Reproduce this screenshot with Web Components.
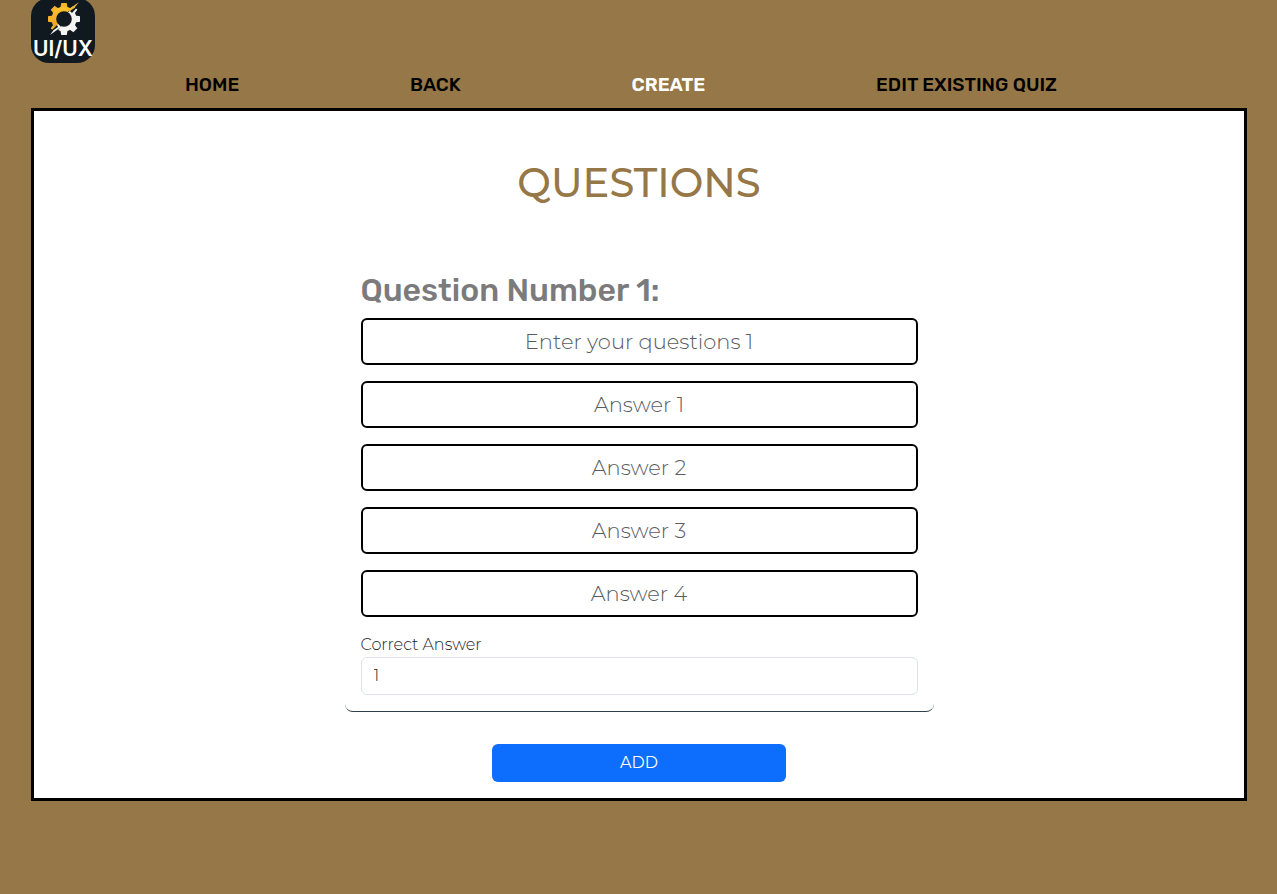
<!DOCTYPE html>
<html lang="en">
<head>
<meta charset="utf-8">
<meta name="viewport" content="width=device-width, initial-scale=1">
<title>Create quiz</title>
<style>
:root { --brand: #967747; --display: Montserrat, Inter, sans-serif; --ui: Rubik, Roboto, sans-serif; }
body { margin: 0; background: var(--brand); font: 300 16px/24px var(--display); color: #212529; }
</style>
</head>
<body>
<quiz-app></quiz-app>
<script>
const define = (name, html, setup) => customElements.define(name, class extends HTMLElement {
  constructor() {
    super();
    this.attachShadow({ mode: 'open' });
  }
  connectedCallback() {
    if (this.shadowRoot.childNodes.length) return;
    const template = document.createElement('template');
    template.innerHTML = '<style>*{box-sizing:border-box}</style>' + html;
    this.shadowRoot.append(template.content.cloneNode(true));
    if (setup) setup(this, this.shadowRoot);
  }
});

const teeth = [0, 45, 90, 135, 180, 225, 270, 315]
  .map(a => `<path transform="rotate(${a} 33 19)" d="M29.4 8 L30.2 3 H35.8 L36.6 8 Z"/>`).join('');

define('app-logo', `
<style>
:host { display: block; width: 64px; height: 63px; }
svg { display: block; width: 100%; height: 100%; }
text { font: 600 21px Inter, sans-serif; }
</style>
<svg viewBox="0 0 64 63" role="img" aria-label="UI/UX">
  <defs>
    <clipPath id="upper"><path d="M14 0 H48 L34 15 L32 22 L18 36 H14 Z"/></clipPath>
    <clipPath id="lower"><path d="M52 0 V40 H20 L33 22 L34 15 L48 3 Z"/></clipPath>
    <linearGradient id="gold" x2="0" y2="1"><stop offset="0" stop-color="#fcc52e"/><stop offset="1" stop-color="#e99a24"/></linearGradient>
  </defs>
  <rect y="-2" width="64" height="65" rx="18" fill="#101820"/>
  <g clip-path="url(#upper)" fill="#f5b32b">${teeth}<circle cx="33" cy="19" r="12.5" fill="url(#gold)"/></g>
  <g clip-path="url(#lower)" fill="#f4f4f2">${teeth}<circle cx="33" cy="19" r="12.5"/></g>
  <circle cx="33" cy="19" r="7.8" fill="#101820"/>
  <path d="M48 2 L37 10 L40 12 Z" fill="#f8bd2c"/>
  <path d="M49 4 L39 11 L41 13 Z" fill="#101820"/>
  <path d="M19 35 L27 24 L30 27 Z" fill="#f4f4f2"/>
  <path d="M17 34 L26 25 L27 27 Z" fill="#101820"/>
  <text x="32" y="56" text-anchor="middle" fill="#fff">UI/UX</text>
</svg>`);

define('nav-link', `
<style>
:host { display: block; }
a { color: #000; text-decoration: none; font: 500 19px/24px var(--ui); white-space: nowrap; }
a[aria-current] { color: #fff; font-weight: 600; }
</style>
<a href="#"><slot></slot></a>`, (host, root) => {
  if (host.hasAttribute('current')) root.querySelector('a').setAttribute('aria-current', 'page');
});

define('app-nav', `
<style>
:host { display: block; }
nav { display: flex; justify-content: space-between; padding: 10px 190px 10px 154px; }
nav { line-height: 24px; }
</style>
<nav><slot></slot></nav>`);

define('text-field', `
<style>
:host { display: block; }
input { display: block; width: 100%; height: 47px; padding: 0 12px; border: 2px solid #000; border-radius: 6px;
  background: #fff; color: #212529; font: 300 21px/30px var(--display); text-align: center; }
input::placeholder { color: #595c5f; opacity: 1; }
</style>
<input type="text">`, (host, root) => {
  const input = root.querySelector('input');
  input.placeholder = host.getAttribute('label');
  input.setAttribute('aria-label', host.getAttribute('label'));
});

define('answer-select', `
<style>
:host { display: block; }
label { display: block; }
select { display: block; width: 100%; height: 38px; padding: 0 12px; appearance: none; border: 1px solid #dee2e6;
  border-radius: 6px; background: #fff; color: #212529; font: 300 16px/24px var(--display); }
</style>
<label for="answer">Correct Answer</label>
<select id="answer"><option>1</option><option>2</option><option>3</option><option>4</option></select>`);

define('question-card', `
<style>
:host { display: block; padding: 16px; border-bottom: 1px solid #2f4048; border-radius: 8px; }
h2 { margin: 0 0 9px; color: #7b7b7d; font: 500 32px/38px var(--ui); }
.fields { display: grid; gap: 16px; }
</style>
<h2><slot name="heading"></slot></h2>
<div class="fields"><slot></slot></div>`);

define('add-button', `
<style>
:host { display: block; }
button { display: block; width: 100%; height: 38px; padding: 0; border: 0; border-radius: 6px; background: #0d6efd;
  color: #fff; font: 400 16px/24px var(--display); }
</style>
<button type="button"><slot></slot></button>`);

define('quiz-panel', `
<style>
:host { display: flex; flex-direction: column; align-items: center; padding: 48px 16px 16px; border: 3px solid #000; background: #fff; }
h1 { margin: 0 0 48px; color: var(--brand); font: 500 40px/48px var(--display); }
question-card { width: 50%; box-sizing: border-box; }
add-button { width: 25%; margin-top: 32px; }
</style>
<h1>QUESTIONS</h1>
<question-card>
  <span slot="heading">Question Number 1:</span>
  <text-field label="Enter your questions 1"></text-field>
  <text-field label="Answer 1"></text-field>
  <text-field label="Answer 2"></text-field>
  <text-field label="Answer 3"></text-field>
  <text-field label="Answer 4"></text-field>
  <answer-select></answer-select>
</question-card>
<add-button>ADD</add-button>`);

define('quiz-app', `
<style>
:host { display: block; padding: 0 30px 0 31px; }
</style>
<header>
  <app-logo></app-logo>
  <app-nav>
    <nav-link>HOME</nav-link>
    <nav-link>BACK</nav-link>
    <nav-link current>CREATE</nav-link>
    <nav-link>EDIT EXISTING QUIZ</nav-link>
  </app-nav>
</header>
<main><quiz-panel></quiz-panel></main>`);
</script>
</body>
</html>
